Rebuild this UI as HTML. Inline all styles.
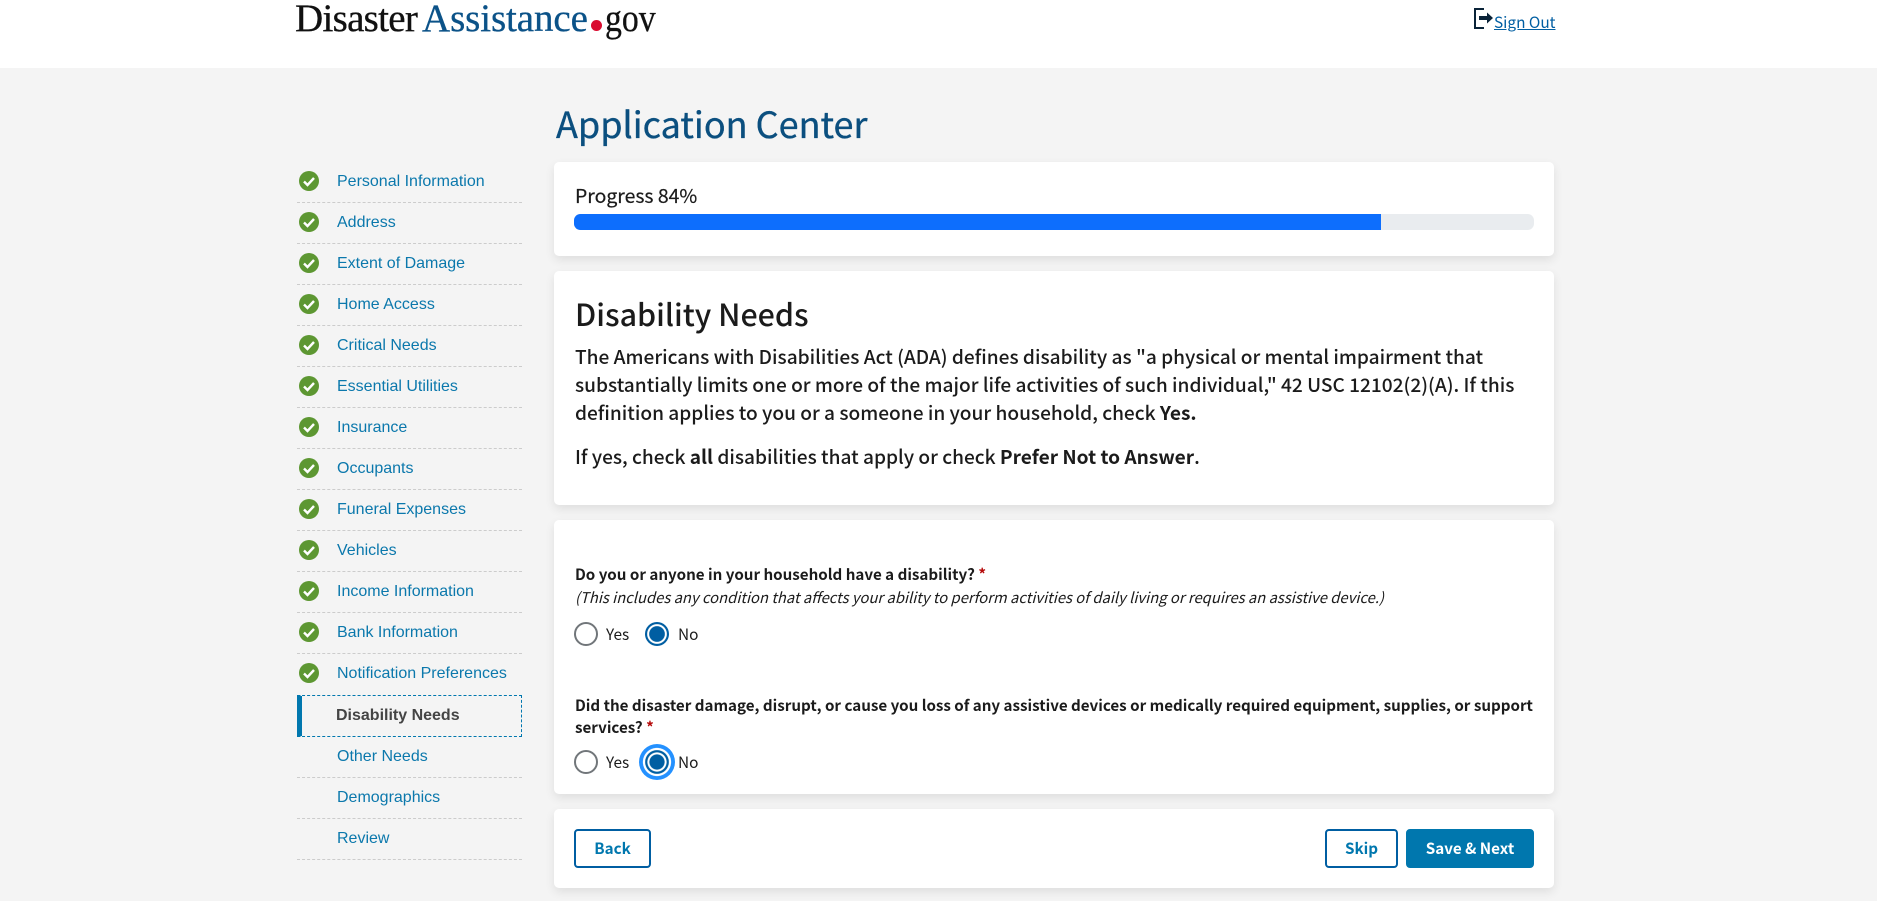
<!DOCTYPE html>
<html lang="en">
<head>
<meta charset="utf-8">
<title>Disability Needs - DisasterAssistance.gov</title>
<style>
html,body{margin:0;padding:0;}
body{width:1877px;height:901px;overflow:hidden;background:#f4f4f4;position:relative;font-family:"Noto Sans CJK SC","Noto Sans CJK JP","Liberation Sans",sans-serif;color:#1b1b1b;}
.a{position:absolute;white-space:nowrap;}
#hdr{left:0;top:0;width:1877px;height:68px;background:#fff;}
.logo{font-family:"Liberation Serif",serif;font-size:39px;line-height:40px;color:#111;top:-1px;-webkit-text-stroke:.3px currentColor;}
.card{position:absolute;left:554px;width:1000px;background:#fff;border-radius:5px;box-shadow:0 4px 10px rgba(0,0,0,.09);}
.nav{position:absolute;left:297px;width:225px;height:40px;border-bottom:1px dashed #ccc;}
.nav span{position:absolute;left:40px;top:0;font:16px/40px "Liberation Sans",Arial,sans-serif;color:#0b78ac;white-space:nowrap;}
.nav svg{position:absolute;left:2px;top:9px;}
.body{font-size:19.1px;line-height:28px;font-weight:500;color:#1b1b1b;}
.body b{font-weight:700;}
.lab{font-size:15.15px;line-height:22px;font-weight:700;color:#1b1b1b;}
.opt{font-size:15.4px;line-height:24px;color:#1b1b1b;}
.r{position:absolute;width:24px;height:24px;box-sizing:border-box;border-radius:50%;background:#fff;}
.r.off{border:2px solid #71767a;}
.r.on{border:0;background:radial-gradient(circle,#005ea2 0,#005ea2 7.5px,#fff 8.2px,#fff 9.5px,#005ea2 10.2px);}
.btn{position:absolute;top:829px;height:39px;box-sizing:border-box;border:2px solid #005ea2;border-radius:4px;background:#fff;color:#0077ae;font-size:15.2px;font-weight:700;line-height:34px;text-align:center;}
</style>
</head>
<body>
<div class="a" id="hdr"></div>
<div class="a logo" style="left:295px;letter-spacing:-.7px;">Disaster</div>
<div class="a logo" style="left:422px;letter-spacing:-.1px;color:#0b5288;">Assistance</div>
<div class="a" style="left:591px;top:19.5px;width:11px;height:11px;border-radius:50%;background:#d90b2f;"></div>
<div class="a logo" style="left:605px;transform:scaleX(.866);transform-origin:0 0;">gov</div>

<svg class="a" style="left:1473px;top:7px;" width="22" height="22" viewBox="0 0 22 22"><path d="M11 2H2v19h9" fill="none" stroke="#0a2338" stroke-width="2"/><path d="M6 9.5h8V6l6 5.5-6 5.5v-3.5H6z" fill="#0a2338" transform="translate(0 -.5)"/></svg>
<div class="a" style="left:1494px;top:10px;font-size:15.4px;line-height:24px;color:#005ea2;text-decoration:underline;">Sign Out</div>

<div class="a" style="left:556px;top:98px;font-size:36px;line-height:50px;color:#0b4f7f;-webkit-text-stroke:.35px #0b4f7f;">Application Center</div>

<div class="nav" style="top:162px"><svg width="20" height="20" viewBox="0 0 20 20"><circle cx="10" cy="10" r="10" fill="#5d9732"/><path d="M5 10.5l3.5 3.5L15 7" fill="none" stroke="#fff" stroke-width="2.4"/></svg><span>Personal Information</span></div>
<div class="nav" style="top:203px"><svg width="20" height="20" viewBox="0 0 20 20"><circle cx="10" cy="10" r="10" fill="#5d9732"/><path d="M5 10.5l3.5 3.5L15 7" fill="none" stroke="#fff" stroke-width="2.4"/></svg><span>Address</span></div>
<div class="nav" style="top:244px"><svg width="20" height="20" viewBox="0 0 20 20"><circle cx="10" cy="10" r="10" fill="#5d9732"/><path d="M5 10.5l3.5 3.5L15 7" fill="none" stroke="#fff" stroke-width="2.4"/></svg><span>Extent of Damage</span></div>
<div class="nav" style="top:285px"><svg width="20" height="20" viewBox="0 0 20 20"><circle cx="10" cy="10" r="10" fill="#5d9732"/><path d="M5 10.5l3.5 3.5L15 7" fill="none" stroke="#fff" stroke-width="2.4"/></svg><span>Home Access</span></div>
<div class="nav" style="top:326px"><svg width="20" height="20" viewBox="0 0 20 20"><circle cx="10" cy="10" r="10" fill="#5d9732"/><path d="M5 10.5l3.5 3.5L15 7" fill="none" stroke="#fff" stroke-width="2.4"/></svg><span>Critical Needs</span></div>
<div class="nav" style="top:367px"><svg width="20" height="20" viewBox="0 0 20 20"><circle cx="10" cy="10" r="10" fill="#5d9732"/><path d="M5 10.5l3.5 3.5L15 7" fill="none" stroke="#fff" stroke-width="2.4"/></svg><span>Essential Utilities</span></div>
<div class="nav" style="top:408px"><svg width="20" height="20" viewBox="0 0 20 20"><circle cx="10" cy="10" r="10" fill="#5d9732"/><path d="M5 10.5l3.5 3.5L15 7" fill="none" stroke="#fff" stroke-width="2.4"/></svg><span>Insurance</span></div>
<div class="nav" style="top:449px"><svg width="20" height="20" viewBox="0 0 20 20"><circle cx="10" cy="10" r="10" fill="#5d9732"/><path d="M5 10.5l3.5 3.5L15 7" fill="none" stroke="#fff" stroke-width="2.4"/></svg><span>Occupants</span></div>
<div class="nav" style="top:490px"><svg width="20" height="20" viewBox="0 0 20 20"><circle cx="10" cy="10" r="10" fill="#5d9732"/><path d="M5 10.5l3.5 3.5L15 7" fill="none" stroke="#fff" stroke-width="2.4"/></svg><span>Funeral Expenses</span></div>
<div class="nav" style="top:531px"><svg width="20" height="20" viewBox="0 0 20 20"><circle cx="10" cy="10" r="10" fill="#5d9732"/><path d="M5 10.5l3.5 3.5L15 7" fill="none" stroke="#fff" stroke-width="2.4"/></svg><span>Vehicles</span></div>
<div class="nav" style="top:572px"><svg width="20" height="20" viewBox="0 0 20 20"><circle cx="10" cy="10" r="10" fill="#5d9732"/><path d="M5 10.5l3.5 3.5L15 7" fill="none" stroke="#fff" stroke-width="2.4"/></svg><span>Income Information</span></div>
<div class="nav" style="top:613px"><svg width="20" height="20" viewBox="0 0 20 20"><circle cx="10" cy="10" r="10" fill="#5d9732"/><path d="M5 10.5l3.5 3.5L15 7" fill="none" stroke="#fff" stroke-width="2.4"/></svg><span>Bank Information</span></div>
<div class="nav" style="top:654px;border-bottom:0"><svg width="20" height="20" viewBox="0 0 20 20"><circle cx="10" cy="10" r="10" fill="#5d9732"/><path d="M5 10.5l3.5 3.5L15 7" fill="none" stroke="#fff" stroke-width="2.4"/></svg><span>Notification Preferences</span></div>

<div class="a" style="left:297px;top:695px;width:225px;height:42px;box-sizing:border-box;border:1px dashed #0077ae;border-left:5px solid #0077ae;"></div>
<div class="a" style="left:336px;top:695px;font:700 16px/41px 'Liberation Sans',Arial,sans-serif;color:#444;">Disability Needs</div>
<div class="nav" style="top:737px"><span>Other Needs</span></div>
<div class="nav" style="top:778px"><span>Demographics</span></div>
<div class="nav" style="top:819px"><span>Review</span></div>

<div class="card" style="top:162px;height:94px"></div>
<div class="a" style="left:575px;top:181px;font-size:19.4px;line-height:28px;-webkit-text-stroke:.2px #1b1b1b;">Progress 84%</div>
<div class="a" style="left:574px;top:214px;width:960px;height:16px;border-radius:6.4px;background:#e9ecef;overflow:hidden;"><div style="width:807px;height:16px;background:#0d6efd;"></div></div>

<div class="card" style="top:271px;height:234px"></div>
<div class="a" style="left:575px;top:291px;font-size:30.4px;line-height:44px;font-weight:500;">Disability Needs</div>
<div class="a body" style="left:575px;top:342px;">The Americans with Disabilities Act (ADA) defines disability as "a physical or mental impairment that</div>
<div class="a body" style="left:575px;top:370px;">substantially limits one or more of the major life activities of such individual," 42 USC 12102(2)(A). If this</div>
<div class="a body" style="left:575px;top:398px;">definition applies to you or a someone in your household, check <b>Yes.</b></div>
<div class="a body" style="left:575px;top:442px;">If yes, check <b>all</b> disabilities that apply or check <b>Prefer Not to Answer</b>.</div>

<div class="card" style="top:520px;height:274px"></div>
<div class="a lab" style="left:575px;top:563px;">Do you or anyone in your household have a disability? <span style="color:#b50909">*</span></div>
<div class="a" style="left:575px;top:587px;font-size:14.8px;line-height:22px;font-style:italic;font-weight:400;">(This includes any condition that affects your ability to perform activities of daily living or requires an assistive device.)</div>
<div class="r off" style="left:574px;top:622px"></div>
<div class="a opt" style="left:606px;top:622px">Yes</div>
<div class="r on" style="left:645px;top:622px"></div>
<div class="a opt" style="left:678px;top:622px">No</div>

<div class="a lab" style="left:575px;top:694px;">Did the disaster damage, disrupt, or cause you loss of any assistive devices or medically required equipment, supplies, or support</div>
<div class="a lab" style="left:575px;top:716px;">services? <span style="color:#b50909">*</span></div>
<div class="r off" style="left:574px;top:750px"></div>
<div class="a opt" style="left:606px;top:750px">Yes</div>
<div class="a" style="left:639px;top:744px;width:36px;height:36px;border-radius:50%;background:radial-gradient(circle,#005ea2 0,#005ea2 7.2px,#fff 8px,#fff 9.2px,#005ea2 10px,#005ea2 11.5px,#fff 12.2px,#fff 13.8px,#2491ff 14.4px);"></div>
<div class="a opt" style="left:678px;top:750px">No</div>

<div class="card" style="top:809px;height:79px"></div>
<div class="btn" style="left:574px;width:77px;">Back</div>
<div class="btn" style="left:1325px;width:73px;">Skip</div>
<div class="btn" style="left:1406px;width:128px;background:#0077ae;border-color:#0077ae;color:#fff;">Save &amp; Next</div>
</body>
</html>
